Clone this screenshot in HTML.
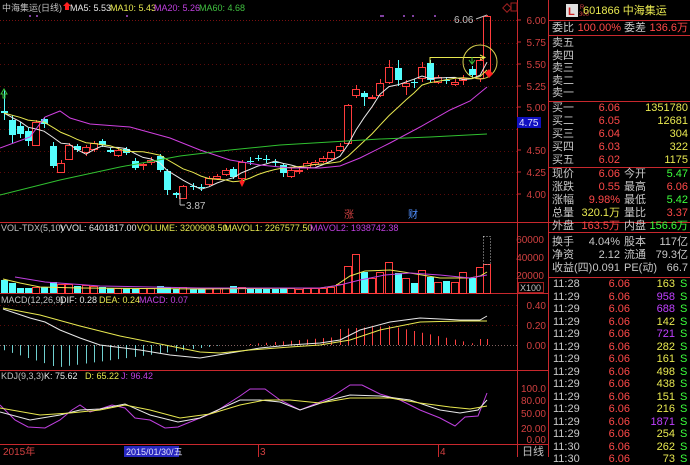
<!DOCTYPE html>
<html><head><meta charset="utf-8">
<style>
*{margin:0;padding:0;box-sizing:border-box}
body{width:690px;height:457px;background:#000;overflow:hidden;position:relative;font-family:"Liberation Sans","Noto Sans CJK SC",sans-serif;color:#c8c8c8}
svg{position:absolute;left:0;top:0}
.t{position:absolute;font-size:11px;line-height:12px;white-space:nowrap}
.r{text-align:right}
.g{color:#c8c8c8}.red{color:#ff4848}.yel{color:#e8e850}.grn{color:#3cff3c}.pur{color:#c040ff}
</style></head><body>
<svg id="s" width="690" height="457" xmlns="http://www.w3.org/2000/svg" font-family="Liberation Sans, Noto Sans CJK SC, sans-serif"></svg>
<div id="rp"></div>
<script>
var S=document.getElementById('s');var h='';
function L(x1,y1,x2,y2,c,w,d){h+='<line x1="'+x1+'" y1="'+y1+'" x2="'+x2+'" y2="'+y2+'" stroke="'+c+'" stroke-width="'+(w||1)+'"'+(d?' stroke-dasharray="'+d+'"':'')+'/>';}
function T(x,y,s,c,fs,a){h+='<text x="'+x+'" y="'+y+'" fill="'+c+'" font-size="'+(fs||10)+'"'+(a?' text-anchor="'+a+'"':'')+'>'+s+'</text>';}
function P(pts,c){h+='<polyline fill="none" stroke="'+c+'" stroke-width="1" points="'+pts.map(function(p){return p.join(',')}).join(' ')+'"/>';}
var RED='#c8282d';
L(0,20.5,517,20.5,'#7a1010',1,'1 2');
[43,64,86,107,129,151,172,194].forEach(function(y){L(0,y+.5,517,y+.5,'#5a0a0a',1,'1 3')});
L(0,222.5,690,222.5,RED);L(0,293.5,548,293.5,RED);L(0,370.5,548,370.5,RED);L(0,444.5,548,444.5,RED);
L(517.5,0,517.5,457,RED);L(548.5,0,548.5,457,RED);
L(548,20.5,690,20.5,RED);L(548,35.5,690,35.5,RED);L(548,101.5,690,101.5,RED);L(548,167.5,690,167.5,RED);L(548,232.5,690,232.5,RED);L(548,277.5,690,277.5,RED);
var pl=[['6.00',24],['5.75',46],['5.50',68],['5.25',90],['5.00',111],['4.50',154],['4.25',176],['4.00',198]];
pl.forEach(function(p){T(546,p[1],p[0],'#d04040',10,'end');L(517,p[1]-4,521,p[1]-4,RED)});
h+='<rect x="517" y="117" width="24" height="11" fill="#1010c0"/>';T(519,126,'4.75','#e0e0ff',10);
var C=[[4,111,113,90,120,0,280],[12,120,135,115,143,0,283],[20,126,134,122,138,0,288],[28,131,141,128,146,0,288],[36,122,145,120,146,1,287],[44,119,124,117,128,0,287],
[53,146,166,142,168,0,282],[61,163,172,160,173,1,284],[69,145,159,143,160,1,284],[77,146,150,144,152,0,286],[86,147,152,145,156,1,285],[94,143,149,141,152,1,286],[102,141,145,139,147,0,287],[110,150,152,148,153,0,288],[118,150,155,148,157,1,288],[126,149,153,147,155,0,288],[135,161,168,158,170,0,289],[143,164,165,163,170,1,288],[151,160,162,157,165,1,288],[160,156,170,154,172,0,286],[167,171,190,169,195,0,287],[176,193,195,192,198,0,289],[183,186,198,185,199,1,287],[193,186,187,183,190,0,289],[201,187,188,184,191,0,289],[209,178,184,176,186,1,288],[217,176,178,174,180,1,288],[226,170,174,168,176,1,288],[233,169,177,167,179,0,286],[242,162,178,160,180,1,287],[250,161,162,157,165,0,289],[258,158,159,155,161,0,289],[266,159,160,155,163,0,289],[275,162,163,159,166,0,289],[283,165,173,163,177,0,288],[291,170,176,168,178,1,288],[299,170,171,166,174,1,289],[307,163,167,161,170,1,288],[315,162,164,160,166,1,288],[323,158,161,156,163,1,288],[331,152,158,150,160,1,287],[340,146,150,143,152,1,284],[348,105,143,104,145,1,266],[356,89,95,85,98,1,254],[364,93,97,91,106,0,272],[372,97,98,95,99,1,278],[380,83,95,79,97,1,272],[389,67,82,60,84,1,262],[398,68,80,60,86,0,273],[406,83,86,80,95,1,278],[414,82,83,79,88,0,283],[422,67,78,62,82,1,270],[430,63,80,60,82,0,277],[438,77,82,75,84,1,282],[446,80,81,77,84,0,281],[455,82,84,79,86,1,282],[463,78,80,75,85,1,272],[472,69,75,66,78,0,278],[480,60,78,57,82,1,267],[487,16,72,15,75,1,264]];
C.forEach(function(c){var x=c[0],col=c[5]?'#ff3c3c':'#54ffff';
 L(x+.5,c[3],x+.5,c[1],col);L(x+.5,c[2],x+.5,c[4],col);
 var bh=Math.max(1,c[2]-c[1]);
 if(c[5])h+='<rect x="'+(x-3.5)+'" y="'+(c[1]+.5)+'" width="7" height="'+bh+'" fill="none" stroke="'+col+'"/>';
 else h+='<rect x="'+(x-3)+'" y="'+c[1]+'" width="7" height="'+bh+'" fill="'+col+'"/>';
 var vt=c[6];
 if(c[5])h+='<rect x="'+(x-3.5)+'" y="'+(vt+.5)+'" width="7" height="'+(293-vt)+'" fill="none" stroke="#ff3c3c"/>';
 else h+='<rect x="'+(x-3)+'" y="'+vt+'" width="7" height="'+(293-vt)+'" fill="#54ffff"/>';
});
h+='<rect x="483.5" y="236.5" width="7" height="28" fill="none" stroke="#c0c0c0" stroke-dasharray="1 2"/>';
var cl=C.map(function(c){return c[5]?c[1]:c[2]});
function ma(n){return C.map(function(c,i){var s=0;for(var k=0;k<n;k++){var j=i-k;s+=j>=0?cl[j]:cl[0]}return [c[0],+(s/n).toFixed(1)]})}
P(ma(5),'#e8e8e8');P(ma(10),'#e8e850');
P([[0,148],[30,137],[45,117],[60,111],[70,118],[90,124],[130,127],[170,138],[200,150],[230,160],[260,165],[290,168],[320,168],[340,166],[360,158],[390,143],[420,127],[450,110],[470,101],[487,87]],'#d040e0');
P([[0,195],[60,180],[120,167],[180,156],[230,150],[280,145],[330,142],[380,139],[430,137],[487,134]],'#30c030');
h+='<path d="M1,94 L4,89 L7,94 L5,94 L5,98 L3,98 L3,94 Z" fill="none" stroke="#3cc03c"/>';
h+='<path d="M239,181 L242,187 L245,181 L243,181 L243,178 L241,178 L241,181 Z" fill="#ff2020"/>';
L(180,193,180,205,'#c0c0c0');L(180,205,185,205,'#c0c0c0');T(186,209,'3.87','#c0c0c0',10);
T(454,23,'6.06','#c0c0c0',10);L(476,19,487,15,'#c0c0c0');
L(430,57.5,484,57.5,'#e8e850');L(430,57,430,64,'#e8e850');h+='<path d="M480,55 L485,57.5 L480,60" fill="none" stroke="#e8e850"/>';
h+='<circle cx="480" cy="62" r="17" fill="none" stroke="#d8d050"/>';
h+='<path d="M469,60 L472,64 L475,60 M472,57 L472,64" stroke="#3cc03c" fill="none"/>';
h+='<path d="M485,73 L489,69 L493,74 L489,78Z" fill="#ff2020"/>';
T(344,218,'涨','#d04040',10);T(408,218,'财','#5090ff',10);
[[29,15],[36,15],[126,15],[380,15],[382,15],[403,15],[412,15],[434,15]].forEach(function(p){h+='<rect x="'+p[0]+'" y="'+p[1]+'" width="2" height="2" fill="#8040a0"/>'});
h+='<rect x="504" y="5" width="6" height="6" fill="none" stroke="#a02020" transform="rotate(45 507 8)"/><rect x="511" y="3" width="6" height="8" fill="none" stroke="#a02020"/>';
T(2,11,'中海集运(日线)','#c0c0c0',9);h+='<path d="M63,6 L67,2 L71,6 L69,6 L69,10 L65,10 L65,6Z" fill="#ff2020"/>';
T(70,11,'MA5: 5.53','#e8e8e8',9);T(110,11,'MA10: 5.43','#e8e850',9);T(154,11,'MA20: 5.26','#c040e0',9);T(199,11,'MA60: 4.68','#40c040',9);
T(1,231,'VOL-TDX(5,10)','#c0c0c0',9);T(60,231,'VVOL: 6401817.00','#e8e8e8',9);T(137,231,'VOLUME: 3200908.50','#e8e850',9);T(224,231,'MAVOL1: 2267577.50','#e8e850',9);T(310,231,'MAVOL2: 1938742.38','#c040e0',9);
P([[3,279],[20,283],[40,287],[80,288],[200,289],[320,288],[335,286],[350,276],[365,271],[390,270],[410,273],[440,278],[470,278],[480,276],[487,272]],'#e8e850');
P([[15,277],[45,282],[100,286],[200,288],[320,288],[340,285],[360,280],[385,275],[410,273],[440,275],[470,278],[487,275]],'#c040e0');
[['60000',243],['40000',261],['20000',279]].forEach(function(p){T(544,p[1],p[0],'#d04040',10,'end')});
h+='<rect x="518.5" y="282.5" width="25" height="10" fill="none" stroke="#a02020"/>';T(520,291,'X100','#c0c0c0',9);
T(1,303,'MACD(12,26,9)','#c0c0c0',9);T(60,303,'DIF: 0.28','#e8e8e8',9);T(99,303,'DEA: 0.24','#e8e850',9);T(139,303,'MACD: 0.07','#c040e0',9);
L(0,345.5,517,345.5,'#806060',1,'1 2');L(0,325.5,517,325.5,'#5a0a0a',1,'1 3');L(0,305.5,517,305.5,'#5a0a0a',1,'1 3');
C.forEach(function(c){var x=c[0],v;
 if(x<222){v=x<60?-(4+x*0.32):-(22-(x-60)*0.135);}else if(x<250)v=0;else if(x<340)v=1+(x-250)*0.08;else if(x<390)v=16+(x-340)*0.06;else if(x<480)v=19-(x-390)*0.21;else v=6;
 if(Math.abs(v)<0.5)return;L(x+.5,345,x+.5,345-v,v<0?'#70d0d0':'#ff4040');});
P([[3,309],[30,318],[45,322],[60,330],[80,338],[100,345],[140,350],[170,355],[200,358],[230,353],[260,348],[290,345],[320,343],[340,340],[360,330],[390,322],[420,318],[460,320],[480,320],[487,316]],'#e8e8e8');
P([[3,308],[40,315],[80,326],[120,336],[160,344],[200,352],[220,353],[250,350],[290,347],[320,345],[350,340],[380,330],[420,322],[460,321],[487,321]],'#e8e850');
[['0.40',309],['0.20',329],['0.00',349]].forEach(function(p){T(546,p[1],p[0],'#d04040',10,'end')});
T(1,379,'KDJ(9,3,3)','#c0c0c0',9);T(44,379,'K: 75.62','#e8e8e8',9);T(85,379,'D: 65.22','#e8e850',9);T(121,379,'J: 96.42','#c040e0',9);
P([[0,405],[15,420],[28,427],[45,428],[60,420],[72,410],[80,405],[90,412],[100,409],[112,405],[125,408],[135,418],[150,420],[165,428],[178,427],[195,420],[215,412],[240,396],[250,389],[265,389],[280,400],[300,410],[330,398],[350,385],[362,385],[380,394],[400,400],[420,410],[440,418],[455,426],[465,417],[478,416],[487,393]],'#c040e0');
P([[0,412],[30,420],[60,415],[80,410],[100,409],[125,404],[150,415],[178,422],[200,418],[240,400],[260,400],[280,402],[300,410],[330,400],[350,395],[380,396],[410,400],[440,410],[460,413],[478,410],[487,400]],'#e8e8e8');
P([[0,408],[40,415],[70,413],[100,410],[125,405],[150,410],[180,418],[210,414],[240,405],[265,400],[290,400],[320,403],[350,398],[390,398],[420,403],[450,407],[470,409],[487,406]],'#e8e850');
[['100.0',392],['80.00',404],['50.00',417],['20.00',432],['0.00',443]].forEach(function(p){T(546,p[1],p[0],'#d04040',10,'end')});
T(3,455,'2015年','#d04040',10);h+='<rect x="124" y="446" width="55" height="11" fill="#2828c0"/>';T(126,455,'2015/01/30/五','#e0e0ff',9);
L(258.5,444,258.5,457,RED);T(260,455,'3','#d04040',10);L(438.5,444,438.5,457,RED);T(440,455,'4','#d04040',10);T(522,455,'日线','#c0c0c0',11);
h+='<rect x="566" y="4" width="12" height="13" fill="#e0e0e0"/><text x="568" y="15" fill="#d02020" font-size="11" font-weight="bold">L</text>';
T(580,9,'R','#d04040',6);T(579,16,'300','#d04040',6);
S.innerHTML=h;
var r='';function D(x,y,s,c,right){r+='<div class="t '+c+(right?' r':'')+'" style="'+(right?'right:'+(690-x)+'px':'left:'+x+'px')+';top:'+y+'px">'+s+'</div>';}
D(583,5,'601866 中海集运','yel');
D(552,22,'委比','g');D(621,22,'100.00%','red',1);D(624,22,'委差','g');D(688,22,'136.6万','red',1);
['卖五','卖四','卖三','卖二','卖一'].forEach(function(s,i){D(552,37+i*12.5,s,'g')});
var b=[['买一','6.06','1351780'],['买二','6.05','12681'],['买三','6.04','304'],['买四','6.03','322'],['买五','6.02','1175']];
b.forEach(function(a,i){var y=102+i*13;D(552,y,a[0],'g');D(620,y,a[1],'red',1);D(688,y,a[2],'yel',1);});
var q=[['现价','6.06','red','今开','5.47','grn'],['涨跌','0.55','red','最高','6.06','red'],['涨幅','9.98%','red','最低','5.42','grn'],['总量','320.1万','yel','量比','3.37','red'],['外盘','163.5万','red','内盘','156.6万','grn']];
q.forEach(function(a,i){var y=168+i*13;D(552,y,a[0],'g');D(620,y,a[1],a[2],1);D(624,y,a[3],'g');D(688,y,a[4],a[5],1);});
var q2=[['换手','4.04%','股本','117亿'],['净资','2.12','流通','79.3亿'],['收益(四)','0.091','PE(动)','66.7']];
q2.forEach(function(a,i){var y=236+i*13;D(552,y,a[0],'g');D(620,y,a[1],'g',1);D(624,y,a[2],'g');D(688,y,a[3],'g',1);});
var tk=[['11:28','163','yel'],['11:29','958','pur'],['11:29','688','pur'],['11:29','142','yel'],['11:29','721','pur'],['11:29','282','yel'],['11:29','161','yel'],['11:29','498','yel'],['11:29','438','yel'],['11:29','151','yel'],['11:29','216','yel'],['11:29','1871','pur'],['11:29','254','yel'],['11:30','262','yel'],['11:30','73','yel']];
tk.forEach(function(a,i){var y=278+i*12.5;D(553,y,a[0],'g');D(630,y,'6.06','red',1);D(675,y,a[1],a[2],1);D(680,y,'S','grn');});
document.getElementById('rp').innerHTML=r;
</script>
</body></html>
